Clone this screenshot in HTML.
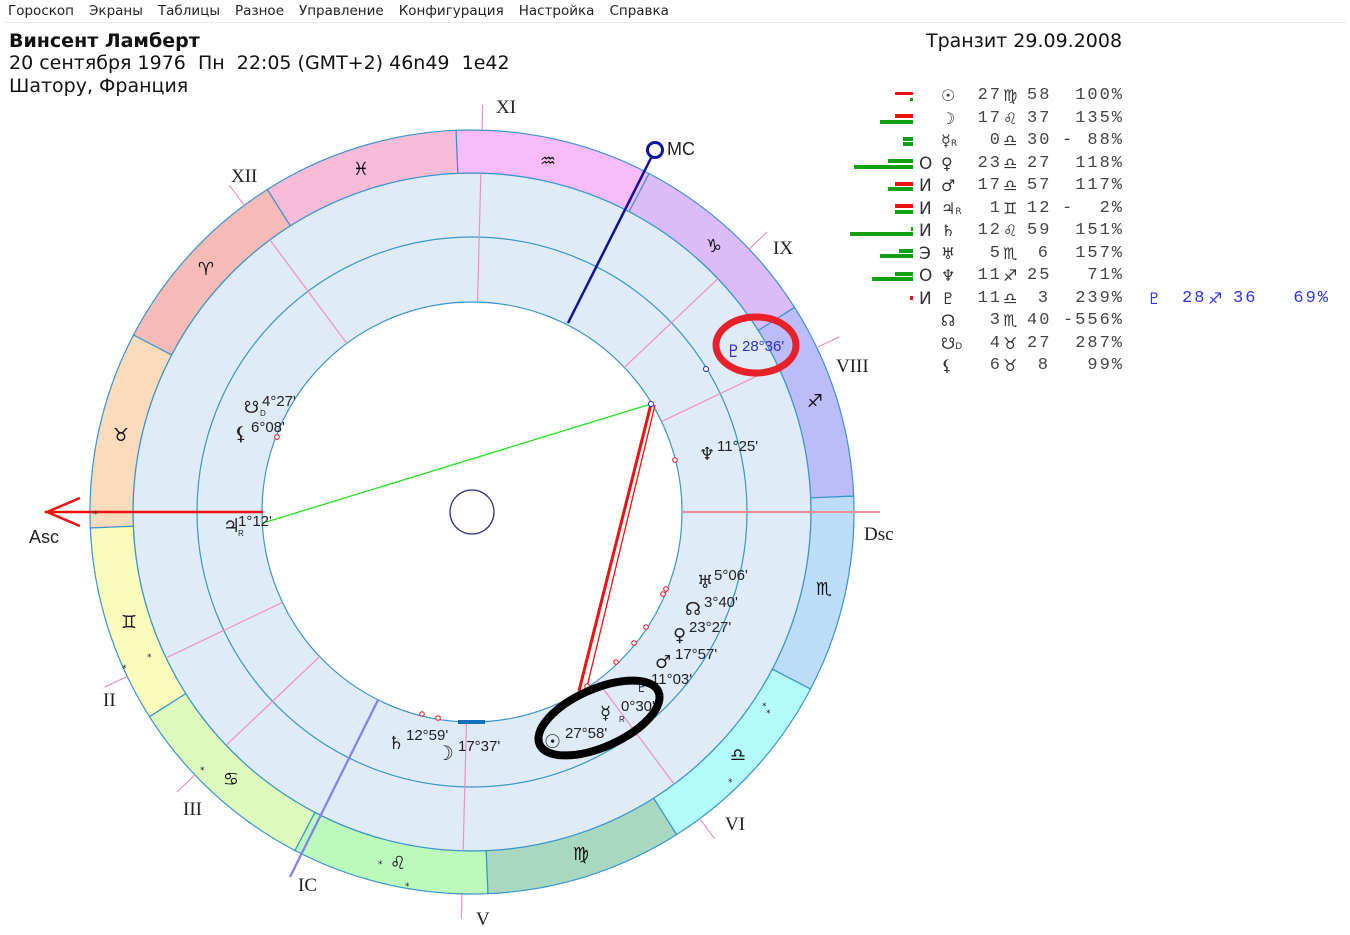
<!DOCTYPE html>
<html><head><meta charset="utf-8">
<style>
html,body{margin:0;padding:0;background:#fff;width:1350px;height:935px;overflow:hidden;position:relative;font-family:"Liberation Sans","DejaVu Sans",sans-serif;}
.menu{position:absolute;top:3px;left:8px;font-family:"DejaVu Sans",sans-serif;font-size:13.5px;color:#222;white-space:nowrap;}
.menu span{margin-right:15px;}
.mline{position:absolute;top:22px;left:4px;width:1342px;height:1px;background:#e8e8e8;}
.h{position:absolute;font-family:"DejaVu Sans",sans-serif;font-size:19px;color:#111;white-space:nowrap;}
.n{position:absolute;font-family:"Liberation Mono","DejaVu Sans Mono",monospace;font-size:17px;letter-spacing:2px;color:#444;white-space:nowrap;line-height:18px;text-align:right;}
.g{position:absolute;font-family:"DejaVu Sans",sans-serif;font-size:16px;color:#333;white-space:nowrap;line-height:18px;}
.bar{position:absolute;height:4px;}
.r{background:#f01010}.gr{background:#10a010}
</style></head><body>
<div class="menu"><span>Гороскоп</span><span>Экраны</span><span>Таблицы</span><span>Разное</span><span>Управление</span><span>Конфигурация</span><span>Настройка</span><span>Справка</span></div>
<div class="mline"></div>
<div class="h" style="left:9px;top:30px;font-weight:bold">Винсент Ламберт</div>
<div class="h" style="left:9px;top:52px">20 сентября 1976&nbsp; Пн&nbsp; 22:05 (GMT+2) 46n49&nbsp; 1e42</div>
<div class="h" style="left:9px;top:75px">Шатору, Франция</div>
<div class="h" style="left:926px;top:30px">Транзит 29.09.2008</div>

<svg width="1350" height="935" style="position:absolute;left:0;top:0" xmlns="http://www.w3.org/2000/svg">
<defs>
<path id="sec" d="M382,0 A382,382 0 0 0 330.82,-191 L293.58,-169.5 A339,339 0 0 1 339,0 Z" stroke="#3a94cc" stroke-width="1.2"/>
</defs>
<g transform="translate(472,512)">
<circle r="339" fill="#e0ebf8" stroke="#3a94cc" stroke-width="1.2"/>
<circle r="275" fill="none" stroke="#3a94cc" stroke-width="1.2"/>
<circle r="210" fill="#fff" stroke="#3a94cc" stroke-width="1.2"/>
<use href="#sec" fill="#f8bcb8" transform="rotate(-122.4)"/>
<use href="#sec" fill="#fadcbc" transform="rotate(-152.4)"/>
<use href="#sec" fill="#fafcbc" transform="rotate(-182.4)"/>
<use href="#sec" fill="#dcfabc" transform="rotate(-212.4)"/>
<use href="#sec" fill="#bcfabc" transform="rotate(-242.4)"/>
<use href="#sec" fill="#a8d8c0" transform="rotate(-272.4)"/>
<use href="#sec" fill="#b4fafa" transform="rotate(-302.4)"/>
<use href="#sec" fill="#bcdcf8" transform="rotate(-332.4)"/>
<use href="#sec" fill="#bcbcf8" transform="rotate(-2.4)"/>
<use href="#sec" fill="#dcbcf8" transform="rotate(-32.4)"/>
<use href="#sec" fill="#f8bcf8" transform="rotate(-62.4)"/>
<use href="#sec" fill="#f8bcd8" transform="rotate(-92.4)"/>
<g stroke="#f090c0" stroke-width="1.2">
<g transform="rotate(-88.5)"><line x1="210" x2="339"/><line x1="382" x2="407"/></g>
<g transform="rotate(-268.5)"><line x1="210" x2="339"/><line x1="382" x2="407"/></g>
<g transform="rotate(-126.6)"><line x1="210" x2="339"/><line x1="382" x2="407"/></g>
<g transform="rotate(-306.6)"><line x1="210" x2="339"/><line x1="382" x2="407"/></g>
<g transform="rotate(-43.5)"><line x1="210" x2="339"/><line x1="382" x2="407"/></g>
<g transform="rotate(-223.5)"><line x1="210" x2="339"/><line x1="382" x2="407"/></g>
<g transform="rotate(-25.5)"><line x1="210" x2="339"/><line x1="382" x2="407"/></g>
<g transform="rotate(-205.5)"><line x1="210" x2="339"/><line x1="382" x2="407"/></g>
</g>
<circle r="22" fill="none" stroke="#303090" stroke-width="1.3"/>
</g>
<line x1="45" y1="512" x2="263" y2="512" stroke="#f01010" stroke-width="2.5"/>
<polyline points="80,498 47,512 80,526" fill="none" stroke="#f01010" stroke-width="2.5"/>
<line x1="683" y1="512" x2="880" y2="512" stroke="#f09090" stroke-width="2"/>
<line x1="568" y1="323" x2="651" y2="158" stroke="#1010a0" stroke-width="2.5"/>
<circle cx="655" cy="150" r="7.5" fill="none" stroke="#1010a0" stroke-width="3"/>
<line x1="378" y1="700" x2="290" y2="877" stroke="#8080f0" stroke-width="2.2"/>
<line x1="263" y1="523" x2="651" y2="404" stroke="#20e020" stroke-width="1.3"/>
<line x1="651" y1="404" x2="579" y2="691" stroke="#f01010" stroke-width="3"/>
<line x1="655" y1="405" x2="587" y2="687" stroke="#f01010" stroke-width="1.3"/>
<line x1="458" y1="722" x2="485" y2="722" stroke="#1070c0" stroke-width="4"/>
<g fill="#fff" stroke="#f01010" stroke-width="1">
<circle cx="277" cy="437" r="2.3"/><circle cx="675" cy="460" r="2.3"/><circle cx="666" cy="589" r="2.3"/><circle cx="663" cy="594" r="2.3"/><circle cx="646" cy="627" r="2.3"/><circle cx="634" cy="643" r="2.3"/><circle cx="616" cy="662" r="2.3"/><circle cx="587" cy="686" r="2.3"/><circle cx="422" cy="714" r="2.3"/><circle cx="438" cy="718" r="2.3"/>
</g>
<g fill="#fff" stroke="#2020e0" stroke-width="1"><circle cx="651" cy="404" r="2.5"/><circle cx="706" cy="369" r="2.5"/></g>
<g font-family="DejaVu Sans" font-size="18" fill="#111" text-anchor="middle">
<text x="361" y="175">♓&#xFE0E;</text><text x="548" y="167">♒&#xFE0E;</text><text x="714" y="252">♑&#xFE0E;</text><text x="815" y="407">♐&#xFE0E;</text><text x="824" y="595">♏&#xFE0E;</text><text x="738" y="761">♎&#xFE0E;</text><text x="581" y="860">♍&#xFE0E;</text><text x="398" y="869">♌&#xFE0E;</text><text x="231" y="785">♋&#xFE0E;</text><text x="129" y="628">♊&#xFE0E;</text><text x="121" y="441">♉&#xFE0E;</text><text x="206" y="275">♈&#xFE0E;</text>
</g>
<g font-family="DejaVu Sans" font-size="9" fill="#222">
<text x="93" y="517">*</text><text x="122" y="671">*</text><text x="147" y="660">*</text><text x="200" y="773">*</text><text x="378" y="867">*</text><text x="405" y="889">*</text><text x="762" y="709">*</text><text x="766" y="716">*</text><text x="728" y="785">*</text>
</g>
<g font-family="Liberation Serif" font-size="19" fill="#222">
<text x="496" y="113">XI</text><text x="231" y="182">XII</text><text x="773" y="254">IX</text><text x="836" y="372">VIII</text><text x="864" y="540">Dsc</text><text x="103" y="706">II</text><text x="183" y="815">III</text><text x="298" y="891">IC</text><text x="476" y="925">V</text><text x="725" y="830">VI</text>
</g>
<text x="29" y="543" font-family="Liberation Sans" font-size="18" fill="#222">Asc</text>
<text x="667" y="155" font-family="Liberation Sans" font-size="18" fill="#222">MC</text>
<g font-family="Liberation Sans" font-size="15" fill="#222">
<text x="244" y="413" font-family="DejaVu Sans" font-size="17">☋</text><text x="260" y="416" font-size="8">D</text><text x="262" y="406">4°27'</text>
<text x="234" y="440" font-family="DejaVu Sans" font-size="19">⚸</text><text x="251" y="432">6°08'</text>
<text x="223" y="532" font-family="DejaVu Sans" font-size="19">♃</text><text x="238" y="536" font-size="8">R</text><text x="238" y="526">1°12'</text>
<text x="726" y="357" font-family="DejaVu Sans" font-size="17" fill="#3030d0">♇</text><text x="742" y="351" fill="#3030d0">28°36'</text>
<text x="699" y="460" font-family="DejaVu Sans" font-size="18">♆</text><text x="717" y="451">11°25'</text>
<text x="697" y="588" font-family="DejaVu Sans" font-size="18">♅</text><text x="714" y="580">5°06'</text>
<text x="685" y="615" font-family="DejaVu Sans" font-size="18">☊</text><text x="704" y="607">3°40'</text>
<text x="673" y="641" font-family="DejaVu Sans" font-size="18">♀</text><text x="689" y="632">23°27'</text>
<text x="655" y="668" font-family="DejaVu Sans" font-size="18">♂</text><text x="675" y="659">17°57'</text>
<text x="636" y="692" font-family="DejaVu Sans" font-size="13">♇</text><text x="651" y="684">11°03'</text>
<text x="600" y="719" font-family="DejaVu Sans" font-size="18">☿</text><text x="619" y="722" font-size="8">R</text><text x="621" y="711">0°30'</text>
<text x="544" y="748" font-family="DejaVu Sans" font-size="19">☉</text><text x="565" y="738">27°58'</text>
<text x="388" y="749" font-family="DejaVu Sans" font-size="18">♄</text><text x="406" y="740">12°59'</text>
<text x="436" y="760" font-family="DejaVu Sans" font-size="20">☽</text><text x="458" y="751">17°37'</text>
</g>
<ellipse cx="756" cy="345" rx="40" ry="28" fill="none" stroke="#e8202a" stroke-width="7"/>
<ellipse cx="599" cy="718" rx="65" ry="29" fill="none" stroke="#000" stroke-width="8" transform="rotate(-24 599 718)"/>
</svg>

<div class="bar r" style="left:895px;top:92px;width:18px;height:3px"></div><div class="bar gr" style="left:910px;top:98px;width:3px;height:3px"></div>
<div class="bar r" style="left:895px;top:114px;width:18px"></div><div class="bar gr" style="left:880px;top:120px;width:33px"></div>
<div class="bar gr" style="left:903px;top:137px;width:10px"></div><div class="bar gr" style="left:903px;top:142px;width:10px"></div>
<div class="bar gr" style="left:888px;top:159px;width:25px"></div><div class="bar gr" style="left:854px;top:165px;width:59px"></div>
<div class="bar r" style="left:895px;top:182px;width:18px"></div><div class="bar gr" style="left:888px;top:187px;width:25px"></div>
<div class="bar r" style="left:895px;top:204px;width:18px"></div><div class="bar gr" style="left:895px;top:210px;width:18px"></div>
<div class="bar gr" style="left:911px;top:227px;width:2px"></div><div class="bar gr" style="left:850px;top:232px;width:63px"></div>
<div class="bar gr" style="left:899px;top:249px;width:14px"></div><div class="bar gr" style="left:880px;top:254px;width:33px"></div>
<div class="bar gr" style="left:895px;top:272px;width:18px"></div><div class="bar gr" style="left:872px;top:277px;width:41px"></div>
<div class="bar r" style="left:910px;top:296px;width:3px"></div>

<div class="g" style="left:919px;top:155px;font-size:17px">О</div>
<div class="g" style="left:919px;top:177px;font-size:17px">И</div>
<div class="g" style="left:919px;top:200px;font-size:17px">И</div>
<div class="g" style="left:919px;top:222px;font-size:17px">И</div>
<div class="g" style="left:919px;top:245px;font-size:17px">Э</div>
<div class="g" style="left:919px;top:267px;font-size:17px">О</div>
<div class="g" style="left:919px;top:290px;font-size:17px">И</div>

<div class="g" style="left:941px;top:87px">☉</div>
<div class="g" style="left:941px;top:110px">☽</div>
<div class="g" style="left:941px;top:132px">☿<span style="font-size:9px">R</span></div>
<div class="g" style="left:941px;top:155px">♀</div>
<div class="g" style="left:941px;top:177px">♂</div>
<div class="g" style="left:941px;top:200px">♃<span style="font-size:9px">R</span></div>
<div class="g" style="left:941px;top:222px">♄</div>
<div class="g" style="left:941px;top:245px">♅</div>
<div class="g" style="left:941px;top:267px">♆</div>
<div class="g" style="left:941px;top:290px">♇</div>
<div class="g" style="left:941px;top:312px">☊</div>
<div class="g" style="left:941px;top:335px">☋<span style="font-size:9px">D</span></div>
<div class="g" style="left:941px;top:357px">⚸</div>

<!-- degrees (right edge 1000), signs (1003), minutes (1027), dash (1063), percent (right edge 1122) -->
<div class="n" style="left:960px;width:42px;top:87px">27</div><div class="g" style="left:1003px;top:87px">♍&#xFE0E;</div><div class="n" style="left:1027px;top:87px">58</div><div class="n" style="left:1062px;width:62px;top:87px">100%</div>
<div class="n" style="left:960px;width:42px;top:110px">17</div><div class="g" style="left:1003px;top:110px">♌&#xFE0E;</div><div class="n" style="left:1027px;top:110px">37</div><div class="n" style="left:1062px;width:62px;top:110px">135%</div>
<div class="n" style="left:960px;width:42px;top:132px">0</div><div class="g" style="left:1003px;top:132px">♎&#xFE0E;</div><div class="n" style="left:1027px;top:132px">30</div><div class="n" style="left:1062px;top:132px">-</div><div class="n" style="left:1062px;width:62px;top:132px">88%</div>
<div class="n" style="left:960px;width:42px;top:155px">23</div><div class="g" style="left:1003px;top:155px">♎&#xFE0E;</div><div class="n" style="left:1027px;top:155px">27</div><div class="n" style="left:1062px;width:62px;top:155px">118%</div>
<div class="n" style="left:960px;width:42px;top:177px">17</div><div class="g" style="left:1003px;top:177px">♎&#xFE0E;</div><div class="n" style="left:1027px;top:177px">57</div><div class="n" style="left:1062px;width:62px;top:177px">117%</div>
<div class="n" style="left:960px;width:42px;top:200px">1</div><div class="g" style="left:1003px;top:200px">♊&#xFE0E;</div><div class="n" style="left:1027px;top:200px">12</div><div class="n" style="left:1062px;top:200px">-</div><div class="n" style="left:1062px;width:62px;top:200px">2%</div>
<div class="n" style="left:960px;width:42px;top:222px">12</div><div class="g" style="left:1003px;top:222px">♌&#xFE0E;</div><div class="n" style="left:1027px;top:222px">59</div><div class="n" style="left:1062px;width:62px;top:222px">151%</div>
<div class="n" style="left:960px;width:42px;top:245px">5</div><div class="g" style="left:1003px;top:245px">♏&#xFE0E;</div><div class="n" style="left:1027px;width:23px;top:245px">6</div><div class="n" style="left:1062px;width:62px;top:245px">157%</div>
<div class="n" style="left:960px;width:42px;top:267px">11</div><div class="g" style="left:1003px;top:267px">♐&#xFE0E;</div><div class="n" style="left:1027px;top:267px">25</div><div class="n" style="left:1062px;width:62px;top:267px">71%</div>
<div class="n" style="left:960px;width:42px;top:290px">11</div><div class="g" style="left:1003px;top:290px">♎&#xFE0E;</div><div class="n" style="left:1027px;width:23px;top:290px">3</div><div class="n" style="left:1062px;width:62px;top:290px">239%</div>
<div class="n" style="left:960px;width:42px;top:312px">3</div><div class="g" style="left:1003px;top:312px">♏&#xFE0E;</div><div class="n" style="left:1027px;top:312px">40</div><div class="n" style="left:1062px;width:62px;top:312px">-556%</div>
<div class="n" style="left:960px;width:42px;top:335px">4</div><div class="g" style="left:1003px;top:335px">♉&#xFE0E;</div><div class="n" style="left:1027px;top:335px">27</div><div class="n" style="left:1062px;width:62px;top:335px">287%</div>
<div class="n" style="left:960px;width:42px;top:357px">6</div><div class="g" style="left:1003px;top:357px">♉&#xFE0E;</div><div class="n" style="left:1027px;width:23px;top:357px">8</div><div class="n" style="left:1062px;width:62px;top:357px">99%</div>

<div class="g" style="left:1147px;top:290px;color:#3030f0">♇</div>
<div class="n" style="left:1182px;top:290px;color:#3030f0">28</div><div class="g" style="left:1208px;top:290px;color:#3030f0">♐&#xFE0E;</div><div class="n" style="left:1233px;top:290px;color:#3030f0">36</div><div class="n" style="left:1280px;width:50px;top:290px;color:#3030f0">69%</div>
</body></html>
